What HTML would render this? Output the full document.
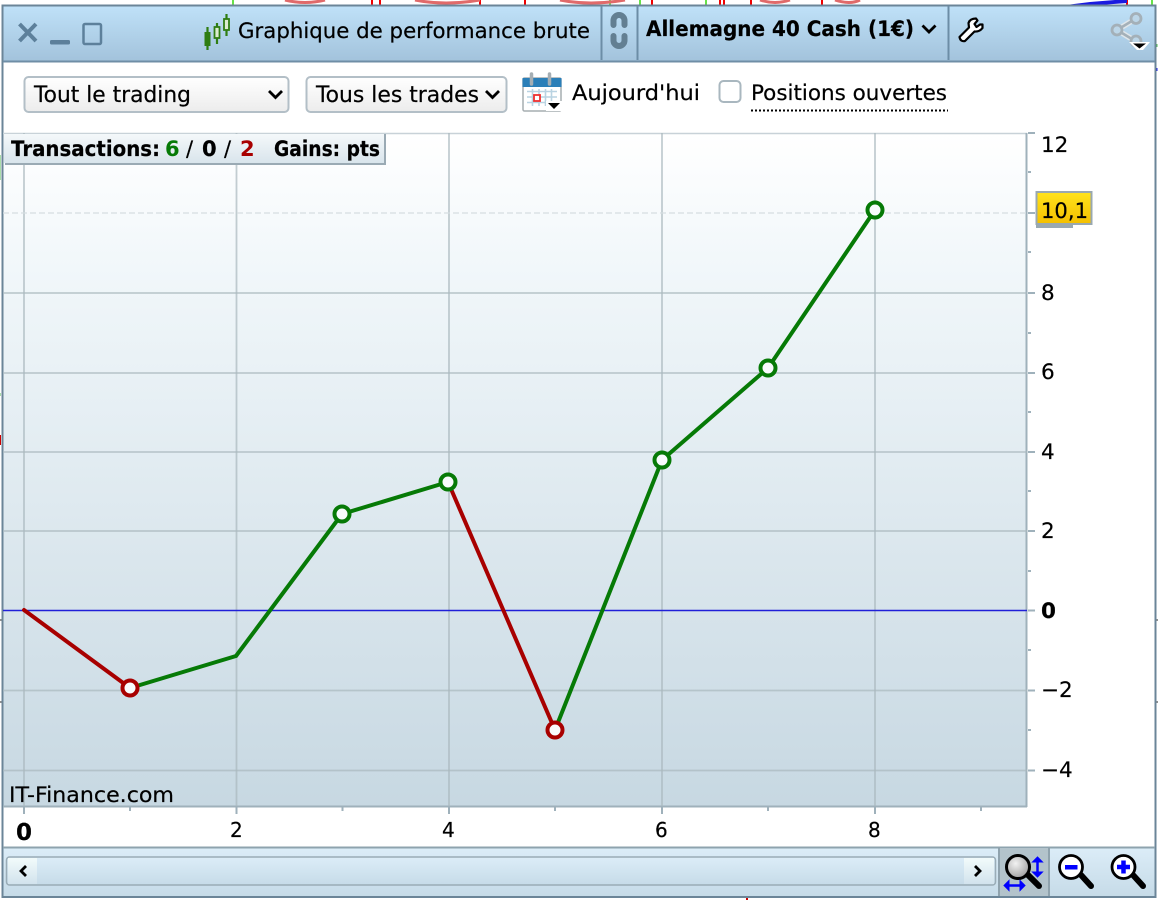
<!DOCTYPE html>
<html><head><meta charset="utf-8"><style>
html,body{margin:0;padding:0;background:#fff;width:1158px;height:900px;overflow:hidden}
svg{display:block;position:absolute;left:0;top:0}
text{font-family:"DejaVu Sans","Liberation Sans",sans-serif;fill:#000;stroke:#000;stroke-width:.2px}
</style></head><body>
<svg width="1158" height="900" viewBox="0 0 1158 900" xmlns="http://www.w3.org/2000/svg">
<defs>
<linearGradient id="tb" x1="0" y1="0" x2="0" y2="1"><stop offset="0" stop-color="#bfe1f8"/><stop offset="1" stop-color="#a3c3dc"/></linearGradient>
<linearGradient id="ch" x1="0" y1="0" x2="0" y2="1"><stop offset="0" stop-color="#ffffff"/><stop offset=".2" stop-color="#f1f7fa"/><stop offset="1" stop-color="#c7d8e2"/></linearGradient>
<linearGradient id="sel" x1="0" y1="0" x2="0" y2="1"><stop offset="0" stop-color="#ffffff"/><stop offset="1" stop-color="#ececec"/></linearGradient>
<linearGradient id="sb" x1="0" y1="0" x2="0" y2="1"><stop offset="0" stop-color="#dcedf8"/><stop offset="1" stop-color="#c6dbe8"/></linearGradient>
<linearGradient id="btn" x1="0" y1="0" x2="0" y2="1"><stop offset="0" stop-color="#f2fbfb"/><stop offset="1" stop-color="#d2e3ed"/></linearGradient>
<linearGradient id="yl" x1="0" y1="0" x2="0" y2="1"><stop offset="0" stop-color="#ffe31c"/><stop offset="1" stop-color="#f4bf00"/></linearGradient>
<linearGradient id="lab" x1="0" y1="0" x2="0" y2="1"><stop offset="0" stop-color="#f4f8fa"/><stop offset="1" stop-color="#d9e5ec"/></linearGradient>
<radialGradient id="gl" cx=".4" cy=".35" r=".7"><stop offset="0" stop-color="#f2f2f2"/><stop offset="1" stop-color="#9c9c9c"/></radialGradient>
</defs>

<!-- background remnants -->
<g fill="none" stroke-width="2">
<path d="M233 0V5M610 0V5M640 0V5M706 0V5M1152 0V5" stroke="#66e24a"/>
<path d="M372 0V5M380 0V5M480 0V5M525 0V5M652 0V5M720 0V5M724 0V5M751 0V5M822 0V5M1127 0V5" stroke="#f00000"/>
<path d="M285 0Q305 5 325 0M415 0Q445 6 480 0M560 0Q590 6 625 0M760 0Q775 5 790 0M835 0Q850 5 860 0" stroke="#e06a6a" stroke-width="3"/>
</g>
<path d="M1066 5L1090 2L1115 0H1127V3L1100 5Z" fill="#1a1ae0"/>
<path d="M0 155V180M0 393V396M1157 44V47" stroke="#55bb55"/>
<path d="M1157 68V71" stroke="#1a1ae0"/>
<path d="M0 435V445" stroke="#cc0000" stroke-width="2"/>
<path d="M0 620h2M0 702h2M1156 620h2M1156 702h2" stroke="#222"/>
<path d="M747 898V900" stroke="#c00" stroke-width="2"/>

<!-- window -->
<rect x="2.500" y="5.500" width="1153" height="891.500" fill="#fff" stroke="#6b8598" stroke-width="2"/>
<!-- title bar -->
<rect x="3.500" y="6.500" width="1151" height="54" fill="url(#tb)"/>
<path d="M3 61.500H1155" stroke="#6f8ea6" stroke-width="2"/>
<path d="M601.500 6V60M637.500 6V60M948.500 6V60" stroke="#6c8da6" stroke-width="2"/>
<!-- window buttons -->
<path d="M19.500 24L36 41M36 24L19.500 41" stroke="#5d809b" stroke-width="4"/>
<rect x="50" y="40" width="20" height="4.500" rx="1.500" fill="#5d809b"/>
<rect x="83.500" y="24" width="17.500" height="20" rx="1.500" fill="none" stroke="#5d809b" stroke-width="2.500"/>
<!-- candle icon -->
<path d="M207.500 27V50M217 23V44M226.500 14V36" stroke="#2f7d12" stroke-width="2.200"/>
<rect x="204.500" y="32" width="6" height="14" fill="#2f7d12"/>
<rect x="214.500" y="27" width="5" height="11" fill="#dcecd0" stroke="#2f7d12" stroke-width="1.800"/>
<rect x="224" y="19" width="5" height="11" fill="#dcecd0" stroke="#2f7d12" stroke-width="1.800"/>
<text x="238" y="38" font-size="21" textLength="352" lengthAdjust="spacingAndGlyphs">Graphique de performance brute</text>
<!-- link icon -->
<path d="M613.500 25V20.500a5.500 5.500 0 0 1 11 0V25" fill="none" stroke="#637f92" stroke-width="6" stroke-linecap="round"/>
<path d="M613.500 36V40.500a5.500 5.500 0 0 0 11 0V36" fill="none" stroke="#637f92" stroke-width="6" stroke-linecap="round"/>
<text x="646" y="36" font-size="21" font-weight="700" textLength="268" lengthAdjust="spacingAndGlyphs">Allemagne 40 Cash (1€)</text>
<path d="M922.500 25.500L929 32L935.500 25.500" fill="none" stroke="#000" stroke-width="2.800"/>
<!-- wrench -->
<path d="M959.500 37L969 27.500L968.500 23Q970 18.500 976 18.500L977.500 20.500L974.500 24L976.500 27L980 24.500H982.500V28Q979.500 32 974.500 31.500L965 41Q960.500 42 959.500 37Z" fill="#fff" stroke="#000" stroke-width="2.200" stroke-linejoin="round"/>
<!-- share -->
<path d="M1117 30L1136 18.500M1117 30L1136 41.500" fill="none" stroke="#dfe6ea" stroke-width="5.500"/>
<path d="M1117 30L1136 18.500M1117 30L1136 41.500" fill="none" stroke="#a4b0b8" stroke-width="2.500"/>
<g fill="#bcd6e8" stroke="#a4b0b8" stroke-width="2.800">
<circle cx="1136" cy="18.500" r="5"/><circle cx="1117" cy="30" r="5"/>
<circle cx="1136" cy="41" r="5"/>
</g>
<path d="M1129 42H1150L1143 50H1137Z" fill="#fff"/>
<path d="M1133 43.500H1146L1139.500 48.500Z" fill="#000"/>

<!-- toolbar -->
<rect x="24.500" y="77" width="264" height="35" rx="4" fill="url(#sel)" stroke="#b3bfc7" stroke-width="2"/>
<text x="34" y="102" font-size="22" textLength="157" lengthAdjust="spacingAndGlyphs">Tout le trading</text>
<path d="M269 91L275.500 97.500L282 91" fill="none" stroke="#000" stroke-width="2.800"/>
<rect x="306.500" y="77" width="200" height="35" rx="4" fill="url(#sel)" stroke="#b3bfc7" stroke-width="2"/>
<text x="316" y="102" font-size="22" textLength="163" lengthAdjust="spacingAndGlyphs">Tous les trades</text>
<path d="M486 91L492.500 97.500L499 91" fill="none" stroke="#000" stroke-width="2.800"/>
<!-- calendar -->
<rect x="523" y="78" width="38" height="33" rx="1.500" fill="#fff" stroke="#a6adb0" stroke-width="1.500"/>
<rect x="522.500" y="78" width="39" height="9" fill="#2b7fb8"/>
<path d="M531.500 74V84M549.500 74V84" stroke="#a5aeb3" stroke-width="3.500" stroke-linecap="round"/>
<path d="M527 91.500H557M527 97H557M527 102.500H557M532.500 89V106M539 89V106M545.500 89V106M551.500 89V106" stroke="#b9d3e2" stroke-width="1.600"/>
<rect x="534" y="95" width="6" height="6" fill="#fff" stroke="#ee3030" stroke-width="1.800"/>
<rect x="546" y="101" width="16" height="10" fill="#fff"/>
<path d="M548 103H560L554 109Z" fill="#000"/>
<text x="572" y="100" font-size="21" textLength="128" lengthAdjust="spacingAndGlyphs">Aujourd'hui</text>
<rect x="719.500" y="81" width="21" height="21" rx="4" fill="#fff" stroke="#a9b7bf" stroke-width="2"/>
<text x="751" y="100" font-size="21" textLength="196" lengthAdjust="spacingAndGlyphs">Positions ouvertes</text>
<path d="M751 110.500H948" stroke="#000" stroke-width="2" stroke-dasharray="2 2"/>

<!-- chart -->
<rect x="3.500" y="133" width="1023" height="673" fill="url(#ch)"/>
<path d="M3 133.500H1027" stroke="#c8d2d8" stroke-width="1.500"/>
<path d="M1026.500 133V807M3 806.500H1027" stroke="#9fb1bb" stroke-width="2"/>
<g stroke="#a9b8bd" stroke-opacity=".7" stroke-width="1.800" fill="none">
<path d="M24 133V806M236.500 133V806M449 133V806M662 133V806M875 133V806"/>
<path d="M3 293H1027M3 373H1027M3 452H1027M3 531H1027M3 690.500H1027M3 770.500H1027"/>
<path d="M3 213H1027" stroke="#d4dcdf" stroke-dasharray="6 3"/>
</g>
<path d="M3 610.500H1027" stroke="#2020d8" stroke-width="1.500"/>
<!-- y ticks -->
<path d="M1028 133H1035M1028 213H1035M1028 293H1035M1028 373H1035M1028 452H1035M1028 531H1035M1028 610.500H1035M1028 690.500H1035M1028 770.500H1035" stroke="#9fb1bb" stroke-width="2"/>
<path d="M1028 172H1031M1028 252H1031M1028 333H1031M1028 412H1031M1028 491H1031M1028 571H1031M1028 650H1031M1028 730H1031" stroke="#9fb1bb" stroke-width="2"/>
<!-- x ticks -->
<path d="M24 807V814M236.500 807V814M449 807V814M662 807V814M875 807V814" stroke="#9fb1bb" stroke-width="2"/>
<path d="M130 807V811M342.500 807V811M555 807V811M768 807V811M981 807V811" stroke="#9fb1bb" stroke-width="2"/>

<g font-size="21.500">
<text x="1041" y="152">12</text>
<text x="1041" y="300">8</text>
<text x="1041" y="379">6</text>
<text x="1041" y="459">4</text>
<text x="1041" y="538">2</text>
<text x="1041" y="618" font-weight="700">0</text>
<text x="1041" y="697">−2</text>
<text x="1041" y="777">−4</text>
<text x="16" y="840" font-weight="700" font-size="23">0</text>
<text x="230" y="837" font-size="20">2</text>
<text x="442" y="837" font-size="20">4</text>
<text x="655" y="837" font-size="20">6</text>
<text x="868" y="837" font-size="20">8</text>
</g>
<!-- price label -->
<rect x="1036" y="223" width="37" height="5" fill="#9aa9b1"/>
<rect x="1036.500" y="192" width="55" height="32" fill="url(#yl)" stroke="#99a8b0" stroke-width="2"/>
<text x="1041" y="218" font-size="21" textLength="47" lengthAdjust="spacingAndGlyphs">10,1</text>

<!-- line -->
<g fill="none" stroke-width="4" stroke-linejoin="round" stroke-linecap="round">
<path d="M130 688L236 656L342 514L448 482M555 730L662 460L768 368L875 210" stroke="#067a06"/>
<path d="M24 610L130 688M448 482L555 730" stroke="#a80000"/>
</g>
<g fill="#f8fbfc" stroke-width="4">
<g stroke="#a80000"><circle cx="130" cy="688" r="7.500"/><circle cx="555" cy="730" r="7.500"/></g>
<g stroke="#067a06"><circle cx="342" cy="514" r="7.500"/><circle cx="448" cy="482" r="7.500"/><circle cx="662" cy="460" r="7.500"/><circle cx="768" cy="368" r="7.500"/><circle cx="875" cy="210" r="7.500"/></g>
</g>

<!-- info label -->
<rect x="4" y="134" width="381" height="29" fill="url(#lab)"/>
<path d="M385 134V164H5" fill="none" stroke="#9aaab4" stroke-width="2"/>
<text x="11" y="156" font-size="21" font-weight="700" textLength="149" lengthAdjust="spacingAndGlyphs">Transactions:</text>
<text x="165" y="156" font-size="21" font-weight="700" style="fill:#067a06;stroke:none">6</text>
<text x="186" y="156" font-size="21">/</text>
<text x="202" y="156" font-size="21" font-weight="700">0</text>
<text x="224" y="156" font-size="21">/</text>
<text x="240" y="156" font-size="21" font-weight="700" style="fill:#a80000;stroke:none">2</text>
<text x="274" y="156" font-size="21" font-weight="700" textLength="106" lengthAdjust="spacingAndGlyphs">Gains: pts</text>
<text x="9" y="802" font-size="21" textLength="165" lengthAdjust="spacingAndGlyphs">IT-Finance.com</text>

<!-- scrollbar -->
<rect x="3.500" y="847" width="1151" height="49" fill="url(#sb)"/>
<path d="M3 847.500H1155" stroke="#8ea3ae" stroke-width="2"/>
<rect x="6.500" y="857" width="989" height="28" rx="3" fill="url(#sb)" stroke="#9aacb6" stroke-width="1.500"/>
<rect x="8" y="858" width="29" height="26" fill="url(#btn)"/>
<rect x="964" y="858" width="30" height="26" fill="url(#btn)"/>
<path d="M26 866L21 871L26 876M975 866L980 871L975 876" fill="none" stroke="#000" stroke-width="2.800"/>
<rect x="999" y="848" width="50" height="48" fill="#b3c3cb"/>
<path d="M999 848V896M1049 848V896" stroke="#8fa2ad" stroke-width="2"/>
<!-- magnifiers -->
<path d="M1028 875L1039 886" stroke="#000" stroke-width="6" stroke-linecap="round"/>
<circle cx="1018" cy="867" r="11.500" fill="url(#gl)" stroke="#000" stroke-width="3"/>
<path d="M1037.500 859V875" stroke="#0000ff" stroke-width="2.500"/>
<path d="M1032.500 872L1037.500 877L1042.500 872Z" fill="#0000ff" stroke="#0000ff"/>
<path d="M1032.500 862H1042.500L1037.500 857Z" fill="#0000ff" stroke="#0000ff"/>
<path d="M1007 885.500H1022" stroke="#0000ff" stroke-width="2.500"/>
<path d="M1009 880.500L1004 885.500L1009 890.500ZM1020 880.500L1025 885.500L1020 890.500Z" fill="#0000ff" stroke="#0000ff"/>

<path d="M1081 875L1091 886" stroke="#000" stroke-width="6" stroke-linecap="round"/>
<circle cx="1071" cy="867" r="11.500" fill="#fff" stroke="#000" stroke-width="2.800"/>
<rect x="1065" y="865" width="12.500" height="4.500" fill="#0000ff"/>

<path d="M1133 875L1143 886" stroke="#000" stroke-width="6" stroke-linecap="round"/>
<circle cx="1123.500" cy="867" r="11.500" fill="#fff" stroke="#000" stroke-width="2.800"/>
<path d="M1117 867H1130M1123.500 860.500V873.500" stroke="#0000ff" stroke-width="4.500"/>
</svg>
</body></html>
